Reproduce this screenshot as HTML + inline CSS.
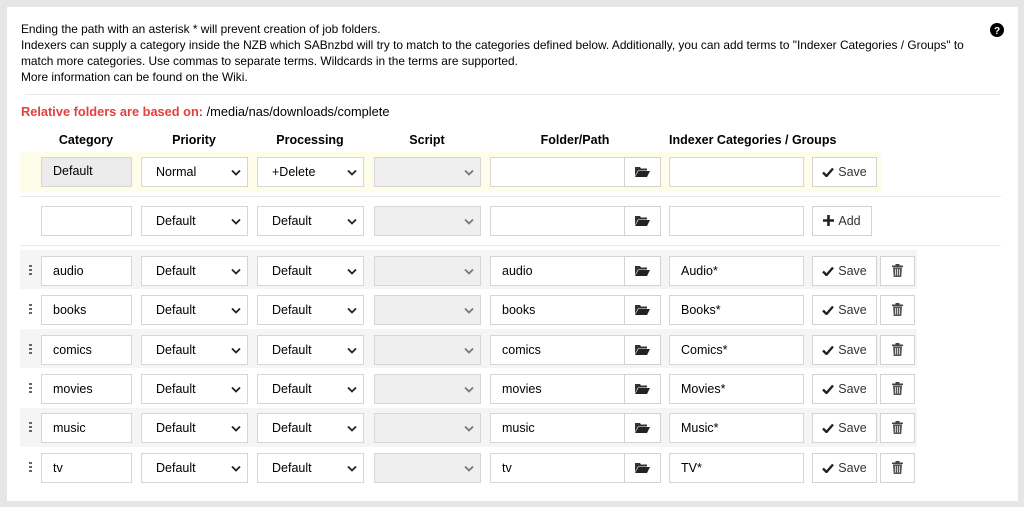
<!DOCTYPE html>
<html><head><meta charset="utf-8"><style>
*{box-sizing:border-box;margin:0;padding:0}
body{width:1024px;height:507px;background:#e6e6e6;font-family:"Liberation Sans",Arial,sans-serif;font-size:13px;color:#000;position:relative;overflow:hidden}
#panel{position:absolute;left:7px;top:7px;width:1011px;height:494px;background:#fff}
.a{position:absolute}
.p{left:21px;line-height:16px;font-size:11.9px;white-space:nowrap}
.hr{position:absolute;left:20px;width:981px;height:1px;background:#e8e8e8}
.th{position:absolute;top:133px;font-weight:bold;font-size:12.5px;text-align:center;white-space:nowrap}
.in{position:absolute;height:30px;border:1px solid #d6d6d6;background:#fff;padding-left:11px;line-height:28px;font-size:12.5px}
.sel{position:absolute;height:30px;border:1px solid #d6d6d6;background:#fff;padding-left:14px;line-height:28px;font-size:12.5px}
.sel svg{position:absolute;right:6px;top:11px}
.dis{background:#efefef}
.btn{position:absolute;height:30px;border:1px solid #d2d2d2;background:#fff;line-height:28px;font-size:12.5px;color:#333;text-align:center}
.bg{position:absolute;left:20px;width:897px;height:39px;background:#f5f5f5}
.dots{position:absolute;left:29px;width:3px}
.dots i{display:block;width:3px;height:2px;background:#666;margin-bottom:2px}
</style></head><body>
<div id="panel"></div>
<div class="a p" style="top:21px">Ending the path with an asterisk * will prevent creation of job folders.</div>
<div class="a p" style="top:37px">Indexers can supply a category inside the NZB which SABnzbd will try to match to the categories defined below. Additionally, you can add terms to "Indexer Categories / Groups" to</div>
<div class="a p" style="top:53px">match more categories. Use commas to separate terms. Wildcards in the terms are supported.</div>
<div class="a p" style="top:69px">More information can be found on the Wiki.</div>
<svg class="a" style="left:990px;top:23px" width="14" height="14" viewBox="0 0 14 14"><circle cx="7" cy="7" r="7" fill="#000"/><text x="7" y="11" font-family="Liberation Sans" font-weight="bold" font-size="10" fill="#fff" text-anchor="middle">?</text></svg>
<div class="hr" style="top:94px;left:25px;width:975px"></div>
<div class="a" style="left:21px;top:104px;font-size:12.8px"><b style="color:#e2413f">Relative folders are based on:</b> /media/nas/downloads/complete</div>

<div class="th" style="left:41px;width:90px">Category</div>
<div class="th" style="left:141px;width:106px">Priority</div>
<div class="th" style="left:257px;width:106px">Processing</div>
<div class="th" style="left:374px;width:106px">Script</div>
<div class="th" style="left:490px;width:170px">Folder/Path</div>
<div class="th" style="left:669px;width:134px">Indexer Categories / Groups</div>

<div class="a" style="left:20px;top:152px;width:861px;height:40px;background:#fefde9"></div>
<div class="hr" style="top:196px"></div>
<div class="hr" style="top:245px"></div>

<div class="bg" style="top:250px"></div>
<div class="bg" style="top:329px"></div>
<div class="bg" style="top:408px"></div>

<div id="rows"></div>
<script>
var chev='<svg width="10" height="7" viewBox="0 0 10 7"><path d="M1 1.5L5 5.5L9 1.5" stroke="#222" stroke-width="1.8" fill="none"/></svg>';
var folder='<svg width="15" height="11" viewBox="0 0 15 11"><path d="M0 1h5l1 1.5h6v2H3L0 10z" fill="#333"/><path d="M3.5 5H15l-3 6H0z" fill="#222"/></svg>';
var check='<svg width="12" height="10" viewBox="0 0 12 10" style="vertical-align:-1px;margin-right:4px"><path d="M1 5.5l3.5 3.5L11 1.5" stroke="#222" stroke-width="2.4" fill="none"/></svg>';
var plus='<svg width="11" height="11" viewBox="0 0 11 11" style="vertical-align:-1px;margin-right:4px"><path d="M5.5 0v11M0 5.5h11" stroke="#222" stroke-width="2.6"/></svg>';
var trash='<svg width="11" height="13" viewBox="0 0 11 13" style="vertical-align:-2px"><rect x="0" y="1.5" width="11" height="1.6" fill="#444"/><rect x="3.5" y="0" width="4" height="2" fill="#444"/><path d="M1 3.5h9l-.7 9.5H1.7z" fill="#555"/><path d="M3.5 5v6.5M5.5 5v6.5M7.5 5v6.5" stroke="#eee" stroke-width=".8"/></svg>';
function row(t,cat,pri,proc,fold,idx,btn,del,dots,catbg){
 var h='';
 if(dots)h+='<div class="dots" style="top:'+(t+9)+'px"><i></i><i></i><i></i></div>';
 h+='<div class="in" style="left:41px;top:'+t+'px;width:91px'+(catbg?';background:#ececec;line-height:26px':'')+'">'+cat+'</div>';
 h+='<div class="sel" style="left:141px;top:'+t+'px;width:107px">'+pri+chev+'</div>';
 h+='<div class="sel" style="left:257px;top:'+t+'px;width:107px">'+proc+chev+'</div>';
 h+='<div class="sel dis" style="left:374px;top:'+t+'px;width:107px">'+chev.replace('#222','#777')+'</div>';
 h+='<div class="in" style="left:490px;top:'+t+'px;width:135px">'+fold+'</div>';
 h+='<div class="btn" style="left:624px;top:'+t+'px;width:37px;padding-top:1px">'+folder+'</div>';
 h+='<div class="in" style="left:669px;top:'+t+'px;width:135px">'+idx+'</div>';
 h+=btn;
 if(del)h+='<div class="btn" style="left:880px;top:'+t+'px;width:35px">'+trash+'</div>';
 return h;
}
var H='';
H+=row(157,'Default','Normal','+Delete','','','<div class="btn" style="left:812px;top:157px;width:65px">'+check+'Save</div>',false,false,true);
H+=row(206,'','Default','Default','','','<div class="btn" style="left:812px;top:206px;width:60px">'+plus+'Add</div>',false,false,false);
var d=[['audio','Audio*'],['books','Books*'],['comics','Comics*'],['movies','Movies*'],['music','Music*'],['tv','TV*']];
var tops=[256,295,335,374,413,453];
for(var i=0;i<6;i++){var t=tops[i];H+=row(t,d[i][0],'Default','Default',d[i][0],d[i][1],'<div class="btn" style="left:812px;top:'+t+'px;width:65px">'+check+'Save</div>',true,true,false);}
document.getElementById('rows').innerHTML=H;
</script>
</body></html>
